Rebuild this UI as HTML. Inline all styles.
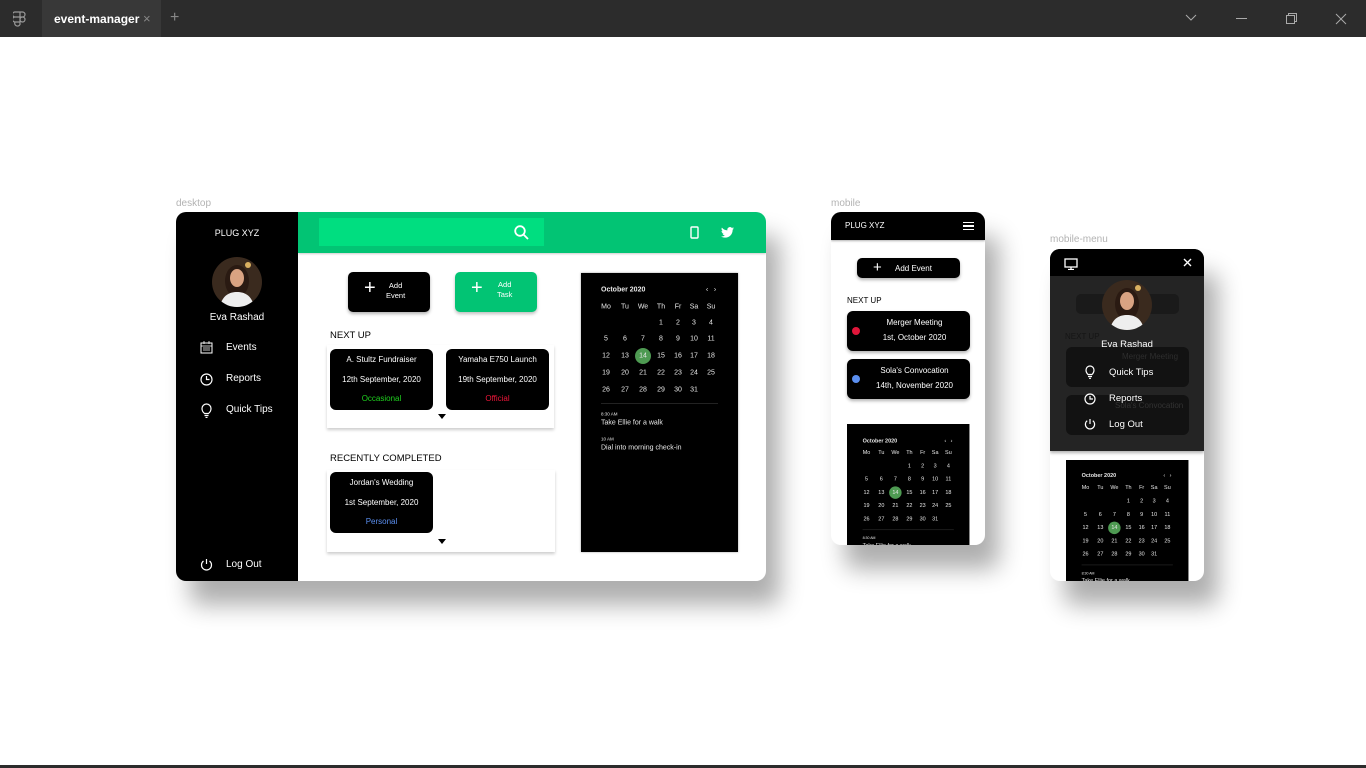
<!DOCTYPE html>
<html><head><meta charset="utf-8"><style>
*{margin:0;padding:0;box-sizing:border-box}
body{width:1366px;height:768px;background:#fff;position:relative;overflow:hidden;font-family:"Liberation Sans",sans-serif;color:#000}
.a{position:absolute}
.tb{left:0;top:0;width:1366px;height:37px;background:#2c2c2c}
.lbl{font-size:10px;color:#b3b3b3}
.frame{overflow:hidden;box-shadow:14px 24px 24px rgba(0,0,0,.32)}
.w{color:#fff}
.cal{background:#000;color:#e8e8e8;width:157px;height:279px;transform-origin:0 0}
.cal span{position:absolute;font-size:7px;transform:translate(-50%,-50%);white-space:nowrap}
.cal .hd{font-weight:bold;transform:translate(0,-50%)}
.cal .l{transform:translate(0,-50%)}
.card{background:#000;border-radius:6px;color:#fff;text-align:center;font-size:8px}
.tri{width:0;height:0;border-left:4px solid transparent;border-right:4px solid transparent;border-top:5px solid #000}
</style></head><body>
<div class="a tb"></div>
<div class="a" style="left:42px;top:0;width:119px;height:37px;background:#383838"></div>
<svg class="a" style="left:13px;top:11px" width="14" height="16" viewBox="0 0 14 16" fill="none" stroke="#999" stroke-width="1.2"><path d="M2 1h5v5H2a2.5 2.5 0 0 1 0-5zM7 1h2.5a2.5 2.5 0 0 1 0 5H7zM2 6h5v5H2a2.5 2.5 0 0 1 0-5zM7 8.5a2.5 2.5 0 1 0 5 0a2.5 2.5 0 1 0-5 0zM2 11h5v2.5A2.5 2.5 0 1 1 2 11z"/></svg>
<div class="a" style="left:54px;top:12px;font-size:12px;color:#fff;font-weight:bold">event-manager</div>
<div class="a" style="left:143px;top:11px;font-size:13px;color:#888">×</div>
<div class="a" style="left:170px;top:9px;font-size:16px;color:#888">+</div>
<svg class="a" style="left:1185px;top:14px" width="12" height="8"><path d="M1 1l5 5 5-5" stroke="#aaa" fill="none"/></svg>
<div class="a" style="left:1236px;top:18px;width:11px;height:1px;background:#aaa"></div>
<svg class="a" style="left:1286px;top:13px" width="11" height="11" fill="none" stroke="#aaa"><rect x="0.5" y="2.5" width="8" height="8"/><path d="M2.5 2.5V.5h8v8h-2"/></svg>
<svg class="a" style="left:1335px;top:13px" width="12" height="12" stroke="#aaa"><path d="M1 1l10 10M11 1L1 11"/></svg>
<div class="a" style="left:0;top:765px;width:1366px;height:3px;background:#2c2c2c"></div>

<!-- desktop -->
<div class="a lbl" style="left:176px;top:198px">desktop</div>
<div class="a frame" style="left:176px;top:212px;width:590px;height:369px;border-radius:10px;background:#fff">
 <div class="a" style="left:0;top:0;width:122px;height:369px;background:#000"></div>
 <div class="a w" style="left:0;top:16px;width:122px;text-align:center;font-size:9px">PLUG XYZ</div>
 <svg class="a" style="left:36px;top:45px" width="50" height="50"><defs><clipPath id="c1"><circle cx="25" cy="25" r="25"/></clipPath></defs><g clip-path="url(#c1)"><rect width="50" height="50" fill="#3a2a1e"/><circle cx="36" cy="8" r="3" fill="#d9b060"/><ellipse cx="25" cy="24" rx="12" ry="16" fill="#2a1a12"/><ellipse cx="25" cy="21" rx="7" ry="9" fill="#d9a382"/><path d="M8 50c2-12 10-15 17-15s15 3 17 15z" fill="#eee"/></g></svg>
 <div class="a w" style="left:0;top:100px;width:122px;text-align:center;font-size:10px">Eva Rashad</div>
 <svg class="a" style="left:24px;top:129px" width="13" height="13" fill="none" stroke="#fff"><rect x="1" y="2" width="11" height="10"/><path d="M1 5h11M4 0v3M9 0v3M3 7h7M3 9h7" stroke-width=".8"/></svg>
 <div class="a w" style="left:50px;top:130px;font-size:10px">Events</div>
 <svg class="a" style="left:24px;top:161px" width="13" height="13" fill="none" stroke="#fff" stroke-width="1.2"><circle cx="6.5" cy="6.5" r="5.5"/><path d="M6.5 3v3.5h3"/></svg>
 <div class="a w" style="left:50px;top:161px;font-size:10px">Reports</div>
 <svg class="a" style="left:25px;top:191px" width="11" height="15" fill="none" stroke="#fff" stroke-width="1.2"><path d="M3.5 10.5C2 9 1 8 1 5.5a4.5 4.5 0 0 1 9 0c0 2.5-1 3.5-2.5 5zM3.5 12.5h4M4.5 14.5h2"/></svg>
 <div class="a w" style="left:50px;top:192px;font-size:10px">Quick Tips</div>
 <svg class="a" style="left:24px;top:346px" width="13" height="13" fill="none" stroke="#fff" stroke-width="1.2"><path d="M6.5 1v5M3.5 3a5 5 0 1 0 6 0"/></svg>
 <div class="a w" style="left:50px;top:347px;font-size:10px">Log Out</div>
 <div class="a" style="left:122px;top:0;width:468px;height:41px;background:#02c474;box-shadow:0 1px 2px rgba(0,0,0,.2)"></div>
 <div class="a" style="left:143px;top:6px;width:225px;height:28px;background:#00de80"></div>
 <svg class="a" style="left:338px;top:13px" width="15" height="15" fill="none" stroke="#fff" stroke-width="1.8"><circle cx="6" cy="6" r="4.8"/><path d="M9.5 9.5l4.5 4.5"/></svg>
 <svg class="a" style="left:514px;top:14px" width="9" height="13" fill="none" stroke="#fff" stroke-width="1.4"><rect x="1" y="1" width="7" height="11" rx="1"/></svg>
 <svg class="a" style="left:545px;top:15px" width="13" height="11" viewBox="0 0 24 20"><path fill="#fff" d="M24 2.4a10 10 0 0 1-2.8.8A5 5 0 0 0 23.3.4a10 10 0 0 1-3.1 1.2A4.9 4.9 0 0 0 11.8 6 14 14 0 0 1 1.7.9a4.9 4.9 0 0 0 1.5 6.6A5 5 0 0 1 1 6.9a4.9 4.9 0 0 0 3.9 4.9 5 5 0 0 1-2.2.1 4.9 4.9 0 0 0 4.6 3.4A9.9 9.9 0 0 1 0 17.3 14 14 0 0 0 7.5 19.5c9 0 14-7.5 14-14v-.6A10 10 0 0 0 24 2.4z"/></svg>
 <div class="a" style="left:172px;top:60px;width:82px;height:40px;background:#000;border-radius:5px;box-shadow:0 2px 3px rgba(0,0,0,.3)"></div>
 <div class="a w" style="left:188px;top:65px;font-size:20px;font-weight:300">+</div>
 <div class="a w" style="left:210px;top:69px;font-size:7.5px;text-align:center;line-height:10px">Add<br>Event</div>
 <div class="a" style="left:279px;top:60px;width:82px;height:40px;background:#02c474;border-radius:5px;box-shadow:0 2px 3px rgba(0,0,0,.25)"></div>
 <div class="a w" style="left:295px;top:65px;font-size:20px;font-weight:300">+</div>
 <div class="a w" style="left:321px;top:68px;font-size:7.5px;text-align:center;line-height:10px">Add<br>Task</div>
 <div class="a" style="left:154px;top:118px;font-size:9.5px">NEXT UP</div>
 <div class="a" style="left:151px;top:133px;width:227px;height:83px;background:#fff;box-shadow:0 2px 3px rgba(0,0,0,.2)"></div>
 <div class="a card" style="left:154px;top:137px;width:103px;height:61px"><div style="margin-top:6px">A. Stultz Fundraiser</div><div style="margin-top:11px">12th September, 2020</div><div style="margin-top:10px;color:#1fd11f">Occasional</div></div>
 <div class="a card" style="left:270px;top:137px;width:103px;height:61px"><div style="margin-top:6px">Yamaha E750 Launch</div><div style="margin-top:11px">19th September, 2020</div><div style="margin-top:10px;color:#f0163a">Official</div></div>
 <div class="a tri" style="left:262px;top:202px"></div>
 <div class="a" style="left:154px;top:241px;font-size:9.5px">RECENTLY COMPLETED</div>
 <div class="a" style="left:151px;top:258px;width:228px;height:82px;background:#fff;box-shadow:0 2px 3px rgba(0,0,0,.2)"></div>
 <div class="a card" style="left:154px;top:260px;width:103px;height:61px"><div style="margin-top:6px">Jordan's Wedding</div><div style="margin-top:11px">1st September, 2020</div><div style="margin-top:10px;color:#5b8ff0">Personal</div></div>
 <div class="a tri" style="left:262px;top:327px"></div>
 <div class="a cal" style="left:405px;top:61px;box-shadow:0 0 2px rgba(0,0,0,.4)">
  <span class="hd" style="left:20px;top:17px">October 2020</span><span style="left:126px;top:17px">‹</span><span style="left:134px;top:17px">›</span>
  <span style="left:25px;top:34px">Mo</span><span style="left:44px;top:34px">Tu</span><span style="left:62px;top:34px">We</span><span style="left:80px;top:34px">Th</span><span style="left:97px;top:34px">Fr</span><span style="left:113px;top:34px">Sa</span><span style="left:130px;top:34px">Su</span>
  <span style="left:80px;top:50px">1</span><span style="left:97px;top:50px">2</span><span style="left:113px;top:50px">3</span><span style="left:130px;top:50px">4</span>
  <span style="left:25px;top:66px">5</span><span style="left:44px;top:66px">6</span><span style="left:62px;top:66px">7</span><span style="left:80px;top:66px">8</span><span style="left:97px;top:66px">9</span><span style="left:113px;top:66px">10</span><span style="left:130px;top:66px">11</span>
  <div class="a" style="left:54px;top:75px;width:16px;height:16px;border-radius:50%;background:#4e9a52"></div>
  <span style="left:25px;top:83px">12</span><span style="left:44px;top:83px">13</span><span style="left:62px;top:83px">14</span><span style="left:80px;top:83px">15</span><span style="left:97px;top:83px">16</span><span style="left:113px;top:83px">17</span><span style="left:130px;top:83px">18</span>
  <span style="left:25px;top:100px">19</span><span style="left:44px;top:100px">20</span><span style="left:62px;top:100px">21</span><span style="left:80px;top:100px">22</span><span style="left:97px;top:100px">23</span><span style="left:113px;top:100px">24</span><span style="left:130px;top:100px">25</span>
  <span style="left:25px;top:117px">26</span><span style="left:44px;top:117px">27</span><span style="left:62px;top:117px">28</span><span style="left:80px;top:117px">29</span><span style="left:97px;top:117px">30</span><span style="left:113px;top:117px">31</span>
  <div class="a" style="left:20px;top:130px;width:117px;height:1px;background:#222"></div>
  <span class="l" style="left:20px;top:141px;font-size:4.5px">8:30 AM</span><span class="l" style="left:20px;top:150px">Take Ellie for a walk</span>
  <span class="l" style="left:20px;top:166px;font-size:4.5px">10 AM</span><span class="l" style="left:20px;top:175px">Dial into morning check-in</span>
 </div>
</div>

<!-- mobile -->
<div class="a lbl" style="left:831px;top:198px">mobile</div>
<div class="a frame" style="left:831px;top:212px;width:154px;height:333px;border-radius:10px;background:#fff">
 <div class="a" style="left:0;top:0;width:154px;height:28px;background:#000;box-shadow:0 1px 2px rgba(0,0,0,.3)"></div>
 <div class="a w" style="left:14px;top:9px;font-size:8px">PLUG XYZ</div>
 <div class="a" style="left:132px;top:10px;width:11px;height:8px;border-top:1.5px solid #fff;border-bottom:1.5px solid #fff"></div>
 <div class="a" style="left:132px;top:13px;width:11px;height:1.5px;background:#fff"></div>
 <div class="a" style="left:26px;top:46px;width:103px;height:20px;background:#000;border-radius:5px;box-shadow:0 2px 3px rgba(0,0,0,.3)"></div>
 <div class="a w" style="left:42px;top:47px;font-size:15px">+</div>
 <div class="a w" style="left:64px;top:52px;font-size:8px">Add Event</div>
 <div class="a" style="left:16px;top:84px;font-size:8px">NEXT UP</div>
 <div class="a card" style="left:16px;top:99px;width:123px;height:40px;box-shadow:0 2px 3px rgba(0,0,0,.3)"><div style="margin-top:7px;padding-left:12px">Merger Meeting</div><div style="margin-top:6px;padding-left:12px">1st, October 2020</div></div>
 <div class="a" style="left:21px;top:115px;width:8px;height:8px;border-radius:50%;background:#e0163a"></div>
 <div class="a card" style="left:16px;top:147px;width:123px;height:40px;box-shadow:0 2px 3px rgba(0,0,0,.3)"><div style="margin-top:7px;padding-left:12px">Sola's Convocation</div><div style="margin-top:6px;padding-left:12px">14th, November 2020</div></div>
 <div class="a" style="left:21px;top:163px;width:8px;height:8px;border-radius:50%;background:#5b8ff0"></div>
 <div class="a cal" style="left:16px;top:212px;transform:scale(.78)">
  <span class="hd" style="left:20px;top:22px">October 2020</span><span style="left:126px;top:22px">‹</span><span style="left:134px;top:22px">›</span>
  <span style="left:25px;top:37px">Mo</span><span style="left:44px;top:37px">Tu</span><span style="left:62px;top:37px">We</span><span style="left:80px;top:37px">Th</span><span style="left:97px;top:37px">Fr</span><span style="left:113px;top:37px">Sa</span><span style="left:130px;top:37px">Su</span>
  <span style="left:80px;top:54px">1</span><span style="left:97px;top:54px">2</span><span style="left:113px;top:54px">3</span><span style="left:130px;top:54px">4</span>
  <span style="left:25px;top:71px">5</span><span style="left:44px;top:71px">6</span><span style="left:62px;top:71px">7</span><span style="left:80px;top:71px">8</span><span style="left:97px;top:71px">9</span><span style="left:113px;top:71px">10</span><span style="left:130px;top:71px">11</span>
  <div class="a" style="left:54px;top:80px;width:16px;height:16px;border-radius:50%;background:#4e9a52"></div>
  <span style="left:25px;top:88px">12</span><span style="left:44px;top:88px">13</span><span style="left:62px;top:88px">14</span><span style="left:80px;top:88px">15</span><span style="left:97px;top:88px">16</span><span style="left:113px;top:88px">17</span><span style="left:130px;top:88px">18</span>
  <span style="left:25px;top:105px">19</span><span style="left:44px;top:105px">20</span><span style="left:62px;top:105px">21</span><span style="left:80px;top:105px">22</span><span style="left:97px;top:105px">23</span><span style="left:113px;top:105px">24</span><span style="left:130px;top:105px">25</span>
  <span style="left:25px;top:122px">26</span><span style="left:44px;top:122px">27</span><span style="left:62px;top:122px">28</span><span style="left:80px;top:122px">29</span><span style="left:97px;top:122px">30</span><span style="left:113px;top:122px">31</span>
  <div class="a" style="left:20px;top:135px;width:117px;height:1px;background:#222"></div>
  <span class="l" style="left:20px;top:146px;font-size:4.5px">8:30 AM</span><span class="l" style="left:20px;top:156px">Take Ellie for a walk</span>
 </div>
</div>

<!-- mobile menu -->
<div class="a lbl" style="left:1050px;top:234px">mobile-menu</div>
<div class="a frame" style="left:1050px;top:249px;width:154px;height:332px;border-radius:10px;background:#fff">
 <div class="a cal" style="left:16px;top:211px;transform:scale(.78)">
  <span class="hd" style="left:20px;top:20px">October 2020</span><span style="left:126px;top:20px">‹</span><span style="left:134px;top:20px">›</span>
  <span style="left:25px;top:36px">Mo</span><span style="left:44px;top:36px">Tu</span><span style="left:62px;top:36px">We</span><span style="left:80px;top:36px">Th</span><span style="left:97px;top:36px">Fr</span><span style="left:113px;top:36px">Sa</span><span style="left:130px;top:36px">Su</span>
  <span style="left:80px;top:53px">1</span><span style="left:97px;top:53px">2</span><span style="left:113px;top:53px">3</span><span style="left:130px;top:53px">4</span>
  <span style="left:25px;top:70px">5</span><span style="left:44px;top:70px">6</span><span style="left:62px;top:70px">7</span><span style="left:80px;top:70px">8</span><span style="left:97px;top:70px">9</span><span style="left:113px;top:70px">10</span><span style="left:130px;top:70px">11</span>
  <div class="a" style="left:54px;top:79px;width:16px;height:16px;border-radius:50%;background:#4e9a52"></div>
  <span style="left:25px;top:87px">12</span><span style="left:44px;top:87px">13</span><span style="left:62px;top:87px">14</span><span style="left:80px;top:87px">15</span><span style="left:97px;top:87px">16</span><span style="left:113px;top:87px">17</span><span style="left:130px;top:87px">18</span>
  <span style="left:25px;top:104px">19</span><span style="left:44px;top:104px">20</span><span style="left:62px;top:104px">21</span><span style="left:80px;top:104px">22</span><span style="left:97px;top:104px">23</span><span style="left:113px;top:104px">24</span><span style="left:130px;top:104px">25</span>
  <span style="left:25px;top:121px">26</span><span style="left:44px;top:121px">27</span><span style="left:62px;top:121px">28</span><span style="left:80px;top:121px">29</span><span style="left:97px;top:121px">30</span><span style="left:113px;top:121px">31</span>
  <div class="a" style="left:20px;top:134px;width:117px;height:1px;background:#222"></div>
  <span class="l" style="left:20px;top:145px;font-size:4.5px">8:30 AM</span><span class="l" style="left:20px;top:155px">Take Ellie for a walk</span>
 </div>
 <div class="a" style="left:0;top:0;width:154px;height:202px;background:#242424;box-shadow:0 2px 3px rgba(0,0,0,.3)"></div>
 <div class="a" style="left:0;top:0;width:154px;height:27px;background:#000"></div>
 <div class="a" style="left:26px;top:45px;width:103px;height:20px;background:#1a1a1a;border-radius:5px"></div>
 <div class="a" style="left:15px;top:83px;font-size:8px;color:#151515">NEXT UP</div>
 <div class="a" style="left:16px;top:98px;width:123px;height:40px;background:#121212;border-radius:6px"></div>
 <div class="a" style="left:16px;top:146px;width:123px;height:40px;background:#121212;border-radius:6px"></div>
 <div class="a" style="left:72px;top:103px;font-size:8px;color:#2e2e2e">Merger Meeting</div>
 <div class="a" style="left:65px;top:152px;font-size:8px;color:#333">Sola's Convocation</div>
 <svg class="a" style="left:14px;top:9px" width="14" height="12" fill="none" stroke="#fff" stroke-width="1.3"><rect x="1" y="1" width="12" height="8"/><path d="M7 9v2M4 11.5h6"/></svg>
 <svg class="a" style="left:133px;top:9px" width="9" height="9" stroke="#fff" stroke-width="1.4"><path d="M1 1l7 7M8 1L1 8"/></svg>
 <svg class="a" style="left:52px;top:31px" width="50" height="50"><defs><clipPath id="c2"><circle cx="25" cy="25" r="25"/></clipPath></defs><g clip-path="url(#c2)"><rect width="50" height="50" fill="#3a2a1e"/><circle cx="36" cy="8" r="3" fill="#d9b060"/><ellipse cx="25" cy="24" rx="12" ry="16" fill="#2a1a12"/><ellipse cx="25" cy="21" rx="7" ry="9" fill="#d9a382"/><path d="M8 50c2-12 10-15 17-15s15 3 17 15z" fill="#eee"/></g></svg>
 <div class="a w" style="left:0;top:90px;width:154px;text-align:center;font-size:9.5px">Eva Rashad</div>
 <svg class="a" style="left:35px;top:116px" width="10" height="14" fill="none" stroke="#fff" stroke-width="1.2"><path d="M3 9.5C1.7 8.2 1 7.3 1 5a4 4 0 0 1 8 0c0 2.3-.7 3.2-2 4.5zM3 11.5h4M4 13.3h2"/></svg>
 <div class="a w" style="left:59px;top:118px;font-size:9.5px">Quick Tips</div>
 <svg class="a" style="left:34px;top:144px" width="12" height="12" fill="none" stroke="#fff" stroke-width="1.2"><circle cx="6" cy="6" r="5"/><path d="M6 3v3h3"/></svg>
 <div class="a w" style="left:59px;top:144px;font-size:9.5px">Reports</div>
 <svg class="a" style="left:34px;top:169px" width="12" height="12" fill="none" stroke="#fff" stroke-width="1.2"><path d="M6 1v5M3.2 2.7a4.6 4.6 0 1 0 5.6 0"/></svg>
 <div class="a w" style="left:59px;top:170px;font-size:9.5px">Log Out</div>
</div>
</body></html>
